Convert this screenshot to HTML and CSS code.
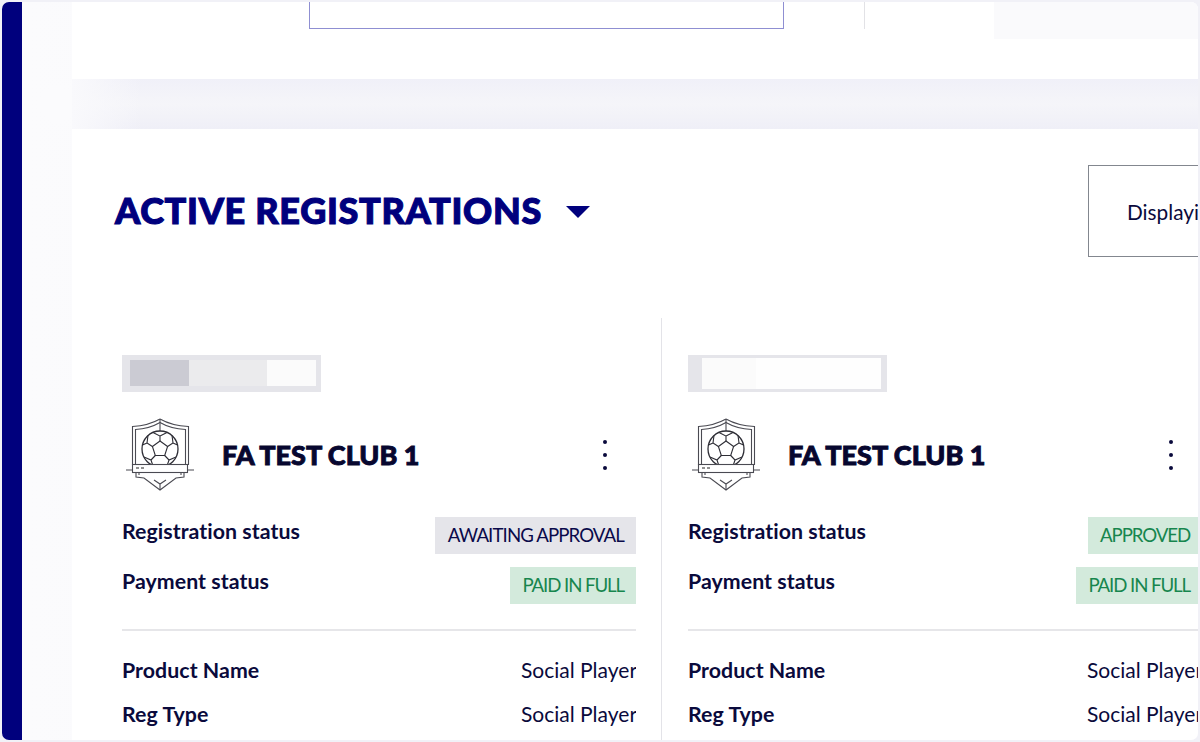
FILE: index.html
```html
<!DOCTYPE html>
<html lang="en">
<head>
<meta charset="utf-8">
<title>Active registrations</title>
<link rel="stylesheet" href="styles.css">
</head>
<body>
<svg class="defs" width="0" height="0" aria-hidden="true">
  <defs>
    <symbol id="crest" viewBox="2 0 72 84">
      <g fill="none" stroke="#4a4a52" stroke-width="1.100">
        <path d="M40 7 C33 11 22 14 12.500 14.500 V53 M40 7 C47 11 58 14 68.500 14.500 V53"/>
        <path d="M40 10.500 C34 14 25 17 15.500 17.500 V53 M40 10.500 C46 14 55 17 65.500 17.500 V53"/>
        <path d="M40 7 V19"/>
        <circle cx="40" cy="37" r="18" stroke="#2e2e36" stroke-width="1.300"/>
        <path d="M40 29 L47.600 34.500 L44.700 43.500 H35.300 L32.400 34.500 Z" stroke="#2e2e36"/>
        <path d="M40 29 V24 L33 20.500 M40 24 L47 20.500 M47.600 34.500 L53 31 L52 23.500 M53 31 L57.500 33 M32.400 34.500 L27 31 L28 23.500 M27 31 L22.500 33 M44.700 43.500 L49 48 L56 45 M49 48 L47 54 M35.300 43.500 L31 48 L24 45 M31 48 L33 54" stroke="#2e2e36"/>
        <rect x="12.500" y="52.500" width="55" height="8" fill="#fff"/>
        <path d="M6 58 H12 M68 58 H74"/>
        <path d="M16 61 V65 L24 66 L40 78 L56 66 L64 65 V61"/>
        <path d="M19 61 V63 M61 61 V63 M40 72 V78 M34 68 L40 72 L46 68"/>
        <path d="M16 56 H19 M21 56 H24" stroke-width="1.200" stroke="#222"/>
      </g>
    </symbol>
  </defs>
</svg>
<div class="frame">
  <nav class="rail"></nav>
  <main class="content">
    <section class="card card-top">
      <div class="search-box"></div>
      <div class="vline"></div>
      <div class="tint"></div>
    </section>
    <div class="gap"></div>
    <section class="card card-main">
      <header class="head">
        <h1 class="title">ACTIVE REGISTRATIONS</h1>
        <span class="caret"></span>
        <div class="display-box">Displaying</div>
      </header>
      <div class="cols">
        <article class="reg">
          <div class="redact">
            <span class="r-a"></span><span class="r-b"></span><span class="r-c"></span>
          </div>
          <div class="club">
            <svg class="crest"><use href="#crest"/></svg>
            <h2 class="club-name">FA TEST CLUB 1</h2>
            <span class="dots"><i></i><i></i><i></i></span>
          </div>
          <div class="status"><span class="label">Registration status</span><span class="badge grey">AWAITING APPROVAL</span></div>
          <div class="status"><span class="label">Payment status</span><span class="badge green">PAID IN FULL</span></div>
          <hr class="rule">
          <div class="info"><span class="label">Product Name</span><span class="value">Social Player</span></div>
          <div class="info"><span class="label">Reg Type</span><span class="value">Social Player</span></div>
        </article>
        <article class="reg reg-second">
          <div class="redact redact-light">
            <span class="r-d"></span>
          </div>
          <div class="club">
            <svg class="crest"><use href="#crest"/></svg>
            <h2 class="club-name">FA TEST CLUB 1</h2>
            <span class="dots"><i></i><i></i><i></i></span>
          </div>
          <div class="status"><span class="label">Registration status</span><span class="badge green">APPROVED</span></div>
          <div class="status"><span class="label">Payment status</span><span class="badge green">PAID IN FULL</span></div>
          <hr class="rule">
          <div class="info"><span class="label">Product Name</span><span class="value">Social Player</span></div>
          <div class="info"><span class="label">Reg Type</span><span class="value">Social Player</span></div>
        </article>
      </div>
    </section>
  </main>
</div>
</body>
</html>
```
FILE: styles.css
```css
* { box-sizing: border-box; }
html, body { margin: 0; height: 100%; }
body {
  background: #f1f1f7;
  padding: 2px;
  overflow: hidden;
  font-family: "Lato", "Liberation Sans", sans-serif;
  color: #0a0a3c;
}
.defs { display: block; height: 0; }
.frame {
  display: flex;
  height: 738px;
  overflow: hidden;
  border-radius: 7px;
  background: #fff;
}
.rail { flex: 0 0 20px; background: #00007d; }
.content {
  flex: 1;
  min-width: 0;
  padding-left: 50px;
  background:
    radial-gradient(circle 55px at 35px 102px, #fbfbfd 30%, rgba(251, 251, 253, 0) 100%),
    linear-gradient(90deg, #fbfbfd 0, #f8f8fb 50%, #eeeef6 100%);
}
.card { background: #fff; overflow: hidden; }
.card-top { display: flex; align-items: flex-start; height: 77px; padding-left: 237px; }
.search-box { flex: 0 0 475px; height: 27px; border: 1px solid #8f8fd2; border-top: 0; }
.vline { flex: 0 0 1px; height: 27px; margin-left: 80px; background: #e2e2e6; }
.tint { flex: 1; height: 37px; margin-left: 129px; background: #fafafc; }
.gap {
  height: 50px;
  background:
    linear-gradient(90deg, #f9f9fc 0, rgba(249, 249, 252, 0) 70px),
    linear-gradient(180deg, #f0f0f8, #f5f5f9 50%, #efeff7);
}
.card-main { height: 611px; }
.head { display: flex; align-items: flex-start; height: 189px; padding: 36px 0 0 43px; }
.title {
  margin: 23px 0 0;
  font-size: 36px;
  line-height: 44px;
  font-weight: 900;
  letter-spacing: 0.7px;
  -webkit-text-stroke: 1.1px #00007d;
  color: #00007d;
  white-space: nowrap;
}
.caret {
  margin: 41px 0 0 24px;
  border-style: solid;
  border-width: 12px 12px 0;
  border-color: #00007d transparent transparent;
}
.display-box {
  flex: 0 0 auto;
  width: 300px;
  height: 92px;
  margin-left: auto;
  margin-right: -190px;
  padding: 34px 0 0 38px;
  border: 1px solid #83878f;
  font-size: 20.800px;
  line-height: 24px;
  white-space: nowrap;
}
.cols { display: flex; width: 1200px; padding-left: 50px; }
.reg { flex: 0 0 540px; padding: 37px 25px 0 0; height: 422px; border-right: 1px solid #e3e3e8; }
.reg-second { flex: 0 0 540px; margin-left: 26px; padding-right: 26px; border-right: 0; }
.redact { display: flex; width: 199px; height: 37px; padding: 5px 5px 6px 8px; background: #e5e5ea; }
.r-a { flex: 0 0 59px; background: #cbcbd3; }
.r-b { flex: 0 0 78px; background: #ebebed; }
.r-c { flex: 1; background: #fbfbfb; }
.redact-light { padding: 3px 6px 3px 14px; }
.r-d { flex: 1; background: linear-gradient(90deg, #fbfbfb 0, #fbfbfb 30%, #fefefe 30%); }
.club { display: flex; align-items: center; height: 84px; margin-top: 20px; }
.crest { flex: 0 0 72px; width: 72px; height: 84px; }
.club-name {
  margin: 2px 0 0 28px;
  font-size: 27px;
  line-height: 34px;
  font-weight: 900;
  -webkit-text-stroke: 0.9px #07072f;
  color: #07072f;
  white-space: nowrap;
}
.dots { display: flex; flex-direction: column; gap: 9px; margin: 2px 29px 0 auto; }
.dots i { width: 4px; height: 4px; border-radius: 50%; background: #0a0a3c; }
.status { display: flex; justify-content: space-between; align-items: flex-start; height: 37px; margin-top: 13px; }
.club + .status { margin-top: 21px; }
.label { font-size: 21.330px; line-height: 28px; font-weight: 700; color: #0a0a3c; letter-spacing: 0.05px; }
.badge { height: 37px; padding: 0 12px 0 13px; font-size: 18.670px; line-height: 37px; letter-spacing: -0.9px; white-space: nowrap; }
.grey { background: #e5e5ea; color: #0a0a4a; }
.green { padding-left: 12px; letter-spacing: -1.1px; background: #d3eadc; color: #17864e; }
.rule { height: 2px; margin: 25px 0 0; border: 0; background: #e6e6e9; }
.info { display: flex; justify-content: space-between; height: 44px; align-items: center; }
.rule + .info { margin-top: 17px; }
.value { width: 115px; overflow: hidden; font-size: 21px; line-height: 28px; white-space: nowrap; }
```
